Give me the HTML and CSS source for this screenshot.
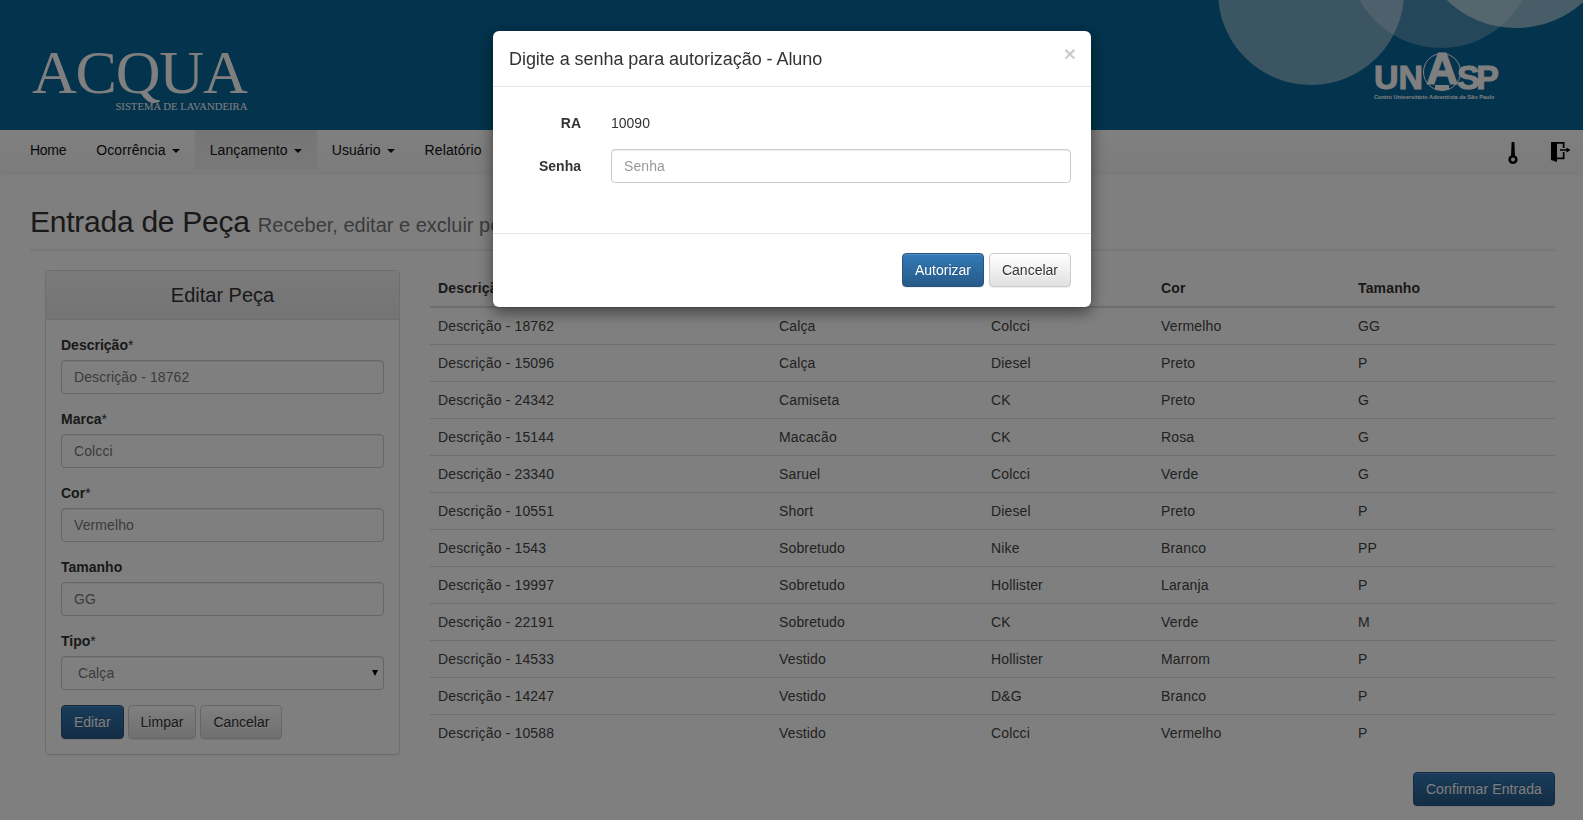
FILE: index.html
```html
<!DOCTYPE html>
<html lang="pt-BR">
<head>
  <meta charset="UTF-8" />
  <title>Entrada de Peça | Acqua</title>
  <link rel="stylesheet" href="styles.css">
</head>
<body>

  <header class="top">
    <span class="circle circle-a"></span>
    <span class="circle circle-b"></span>
    <span class="circle circle-c"></span>

    <div class="brand">
      <div class="brand-name">ACQUA</div>
      <div class="brand-sub">SISTEMA DE LAVANDEIRA</div>
    </div>

    <div class="unasp">
      <div class="unasp-word">
        <span class="unasp-un">UN</span>
        <span class="unasp-ring"><span class="unasp-a">A</span></span>
        <span class="unasp-sp">SP</span>
      </div>
      <div class="unasp-small">Centro Universitário Adventista de São Paulo</div>
    </div>
  </header>

  <nav class="navbar">
    <a href="#">Home</a>
    <a href="#">Ocorrência <span class="caret"></span></a>
    <a href="#" class="active">Lançamento <span class="caret"></span></a>
    <a href="#">Usuário <span class="caret"></span></a>
    <a href="#">Relatório</a>

    <div class="nav-icons">
      <svg width="12" height="24" viewBox="0 0 12 24">
        <path d="M4.600 0h2.800l.6 15H4z"/>
        <circle class="key-ring" cx="6" cy="17.500" r="3.300"/>
      </svg>
      <svg width="20" height="20" viewBox="0 0 20 20">
        <path d="M0 0h13.500v6h-1.700V1.700H6v13.800h5.800V10h1.700v7.200H6V20l-6-2z"/>
        <path d="M9 7.300h6.500V5.500L19.500 8l-4 2.500V8.700H9z"/>
      </svg>
    </div>
  </nav>

  <main class="page">
    <h1 class="page-title">Entrada de Peça <small>Receber, editar e excluir peças</small></h1>

    <div class="columns">
      <section class="panel">
        <h3 class="panel-heading">Editar Peça</h3>
        <form class="panel-body">
          <div class="group">
            <label for="descricao">Descrição<span>*</span></label>
            <input type="text" id="descricao" value="Descrição - 18762">
          </div>
          <div class="group">
            <label for="marca">Marca<span>*</span></label>
            <input type="text" id="marca" value="Colcci">
          </div>
          <div class="group">
            <label for="cor">Cor<span>*</span></label>
            <input type="text" id="cor" value="Vermelho">
          </div>
          <div class="group">
            <label for="tamanho">Tamanho</label>
            <input type="text" id="tamanho" value="GG">
          </div>
          <div class="group">
            <label for="tipo">Tipo<span>*</span></label>
            <div class="select-wrap">
              <select id="tipo">
                <option>Calça</option>
                <option>Camiseta</option>
                <option>Macacão</option>
              </select>
            </div>
          </div>
          <div class="actions">
            <button type="button" class="btn btn-primary">Editar</button>
            <button type="button" class="btn">Limpar</button>
            <button type="button" class="btn">Cancelar</button>
          </div>
        </form>
      </section>

      <section class="list">
        <table>
          <thead>
            <tr>
              <th class="col-desc">Descrição</th>
              <th class="col-tipo">Tipo</th>
              <th class="col-marca">Marca</th>
              <th class="col-cor">Cor</th>
              <th>Tamanho</th>
            </tr>
          </thead>
          <tbody>
            <tr><td>Descrição - 18762</td><td>Calça</td><td>Colcci</td><td>Vermelho</td><td>GG</td></tr>
            <tr><td>Descrição - 15096</td><td>Calça</td><td>Diesel</td><td>Preto</td><td>P</td></tr>
            <tr><td>Descrição - 24342</td><td>Camiseta</td><td>CK</td><td>Preto</td><td>G</td></tr>
            <tr><td>Descrição - 15144</td><td>Macacão</td><td>CK</td><td>Rosa</td><td>G</td></tr>
            <tr><td>Descrição - 23340</td><td>Saruel</td><td>Colcci</td><td>Verde</td><td>G</td></tr>
            <tr><td>Descrição - 10551</td><td>Short</td><td>Diesel</td><td>Preto</td><td>P</td></tr>
            <tr><td>Descrição - 1543</td><td>Sobretudo</td><td>Nike</td><td>Branco</td><td>PP</td></tr>
            <tr><td>Descrição - 19997</td><td>Sobretudo</td><td>Hollister</td><td>Laranja</td><td>P</td></tr>
            <tr><td>Descrição - 22191</td><td>Sobretudo</td><td>CK</td><td>Verde</td><td>M</td></tr>
            <tr><td>Descrição - 14533</td><td>Vestido</td><td>Hollister</td><td>Marrom</td><td>P</td></tr>
            <tr><td>Descrição - 14247</td><td>Vestido</td><td>D&amp;G</td><td>Branco</td><td>P</td></tr>
            <tr><td>Descrição - 10588</td><td>Vestido</td><td>Colcci</td><td>Vermelho</td><td>P</td></tr>
          </tbody>
        </table>
        <div class="list-footer">
          <button type="button" class="btn btn-primary">Confirmar Entrada</button>
        </div>
      </section>
    </div>
  </main>

  <div class="backdrop"></div>

  <div class="modal">
    <div class="modal-header">
      <h4>Digite a senha para autorização - Aluno</h4>
      <button type="button" class="close">&times;</button>
    </div>
    <form class="modal-body">
      <span class="modal-label">RA</span>
      <span class="modal-static">10090</span>
      <label class="modal-label" for="senha">Senha</label>
      <input type="password" id="senha" placeholder="Senha">
    </form>
    <div class="modal-footer">
      <button type="button" class="btn btn-primary">Autorizar</button>
      <button type="button" class="btn">Cancelar</button>
    </div>
  </div>

</body>
</html>
```

FILE: styles.css
```css
* {
  box-sizing: border-box;
}

html, body {
  height: 100%;
}

body {
  margin: 0;
  font-family: "Liberation Sans", Arial, sans-serif;
  font-size: 14px;
  line-height: 20px;
  color: #333;
  background: #fff;
  overflow: hidden;
}

/* top banner */
.top {
  position: relative;
  height: 130px;
  background: #07669a;
  overflow: hidden;
  display: flex;
  align-items: flex-start;
  justify-content: space-between;
  padding: 0 85px 0 32px;
}

.circle {
  position: absolute;
  width: 186px;
  height: 186px;
  border-radius: 50%;
}

.circle-a {
  left: 1218px;
  top: -101px;
  background: rgba(255, 255, 255, 0.45);
}

.circle-b {
  left: 1348px;
  top: -138px;
  background: rgba(255, 255, 255, 0.27);
}

.circle-c {
  left: 1416px;
  top: -172px;
  width: 200px;
  height: 200px;
  background: rgba(255, 255, 255, 0.55);
}

.brand {
  margin-top: 39px;
  color: #fff;
  font-family: "Liberation Serif", "Times New Roman", serif;
  text-align: right;
}

.brand-name {
  font-size: 62px;
  line-height: 66px;
  letter-spacing: -1.200px;
}

.brand-sub {
  font-size: 10.700px;
  line-height: 12px;
  margin-top: -5px;
  margin-right: -1px;
}

.unasp {
  position: relative;
  width: 124px;
  margin-top: 53px;
  color: #fff;
}

.unasp-word {
  display: flex;
  height: 40px;
  font-weight: bold;
  font-size: 34px;
  line-height: 40px;
  -webkit-text-stroke: 1px #fff;
}

.unasp-un {
  flex: 0 0 48px;
  padding-top: 4px;
}

.unasp-ring {
  position: relative;
  flex: 0 0 38px;
  height: 38px;
  border: 1px solid #fff;
  border-radius: 50%;
}

.unasp-a {
  position: absolute;
  left: 0;
  right: 0;
  top: -5px;
  font-size: 44px;
  text-align: center;
  -webkit-text-stroke: 1.200px #fff;
}

.unasp-ring::after {
  content: "";
  position: absolute;
  left: 11px;
  bottom: 0;
  width: 14px;
  height: 5px;
  background: #fff;
}

.unasp-sp {
  flex: 0 0 42px;
  margin-left: -4px;
  padding-top: 4px;
  letter-spacing: -3.500px;
}

.unasp-small {
  margin-top: 1px;
  font-size: 5.600px;
  font-weight: bold;
  line-height: 7px;
  white-space: nowrap;
}

/* nav */
.navbar {
  display: flex;
  height: 42px;
  padding: 0 12px 0 15px;
  background: linear-gradient(to bottom, #fff 0%, #f8f8f8 100%);
  box-shadow: 0 1px 5px rgba(0, 0, 0, 0.08);
}

.navbar a {
  height: 40px;
  padding: 0 15px;
  line-height: 40px;
  letter-spacing: 0.100px;
  color: #111;
  text-decoration: none;
}

.navbar a:first-child {
  letter-spacing: -0.300px;
}

.navbar a.active {
  background: linear-gradient(to bottom, #ebebeb 0%, #f3f3f3 100%);
}

.caret {
  display: inline-block;
  width: 0;
  height: 0;
  margin-left: 2px;
  vertical-align: middle;
  border-top: 4px solid;
  border-right: 4px solid transparent;
  border-left: 4px solid transparent;
}

.nav-icons {
  margin-left: auto;
  display: flex;
  align-items: flex-start;
  gap: 32px;
  padding-top: 12px;
}

.key-ring {
  fill: none;
  stroke: #000;
  stroke-width: 2.600px;
}

/* page */
.page {
  padding: 0 28px 0 30px;
}

.page-title {
  margin: 33px 0 19px;
  padding-bottom: 11px;
  border-bottom: 2px solid #eee;
  font-size: 30px;
  font-weight: normal;
  line-height: 33px;
  letter-spacing: -0.250px;
}

.page-title small {
  font-size: 20px;
  line-height: 1;
  letter-spacing: 0;
  color: #777;
}

.columns {
  display: flex;
  gap: 30px;
  padding-left: 15px;
}

.panel {
  flex: 0 0 355px;
  height: 485px;
  border: 1px solid #ddd;
  border-radius: 4px;
  background: #fff;
  box-shadow: 0 1px 2px rgba(0, 0, 0, 0.05);
}

.panel-heading {
  height: 49px;
  margin: 0;
  border-bottom: 1px solid #ddd;
  border-radius: 3px 3px 0 0;
  background: linear-gradient(to bottom, #f5f5f5 0%, #e8e8e8 100%);
  font-size: 20px;
  font-weight: normal;
  line-height: 48px;
  text-align: center;
}

.panel-body {
  padding: 15px;
}

.group {
  margin-bottom: 15px;
}

.group label {
  display: block;
  margin-bottom: 5px;
  font-weight: bold;
}

.group label span {
  font-weight: normal;
}

input, select {
  display: block;
  width: 100%;
  height: 34px;
  padding: 6px 12px;
  border: 1px solid #ccc;
  border-radius: 4px;
  background: #fff;
  box-shadow: inset 0 1px 1px rgba(0, 0, 0, 0.075);
  font-family: inherit;
  font-size: 14px;
  letter-spacing: 0.100px;
  color: #777;
}

input::placeholder {
  color: #999;
}

select {
  appearance: none;
  padding-left: 16px;
}

.select-wrap {
  position: relative;
}

.select-wrap::after {
  content: "";
  position: absolute;
  right: 6px;
  top: 14px;
  border-top: 6px solid #000;
  border-left: 3.500px solid transparent;
  border-right: 3.500px solid transparent;
}

.actions {
  display: flex;
  gap: 4px;
}

.btn {
  height: 34px;
  padding: 6px 12px;
  border: 1px solid #ccc;
  border-radius: 4px;
  background: linear-gradient(to bottom, #fff 0%, #e0e0e0 100%);
  box-shadow: inset 0 1px 0 rgba(255, 255, 255, 0.15), 0 1px 1px rgba(0, 0, 0, 0.075);
  font-family: inherit;
  font-size: 14px;
  line-height: 20px;
  color: #333;
  text-shadow: 0 1px 0 #fff;
}

.btn-primary {
  border-color: #245580;
  background: linear-gradient(to bottom, #337ab7 0%, #265a88 100%);
  color: #fff;
  text-shadow: 0 -1px 0 rgba(0, 0, 0, 0.2);
}

.list-footer .btn {
  letter-spacing: 0.100px;
}

/* table */
.list {
  flex: 1;
}

table {
  width: 100%;
  border-collapse: collapse;
  table-layout: fixed;
}

th, td {
  padding: 8px;
  text-align: left;
  letter-spacing: 0.150px;
}

th {
  border-bottom: 2px solid #ddd;
}

td {
  border-top: 1px solid #ddd;
  color: #444;
}

tbody tr:first-child td {
  border-top: 0;
}

.col-desc { width: 341px; }
.col-tipo { width: 212px; }
.col-marca { width: 170px; }
.col-cor { width: 197px; }

.list-footer {
  display: flex;
  justify-content: flex-end;
  margin-top: 21px;
}

/* modal */
.backdrop {
  position: fixed;
  inset: 0;
  background: rgba(0, 0, 0, 0.5);
}

.modal {
  position: fixed;
  top: 31px;
  left: 493px;
  width: 598px;
  border-radius: 6px;
  background: #fff;
  box-shadow: 0 5px 15px rgba(0, 0, 0, 0.5);
}

.modal-header {
  display: flex;
  justify-content: space-between;
  padding: 16px 15px 13px 16px;
  border-bottom: 1px solid #e5e5e5;
}

.modal-header h4 {
  margin: 0;
  font-size: 18px;
  font-weight: normal;
  line-height: 25.500px;
  letter-spacing: -0.050px;
}

.close {
  height: 21px;
  padding: 0;
  margin-top: -4px;
  border: 0;
  background: none;
  font-family: inherit;
  font-size: 21px;
  font-weight: bold;
  line-height: 21px;
  color: #000;
  opacity: 0.2;
}

.modal-body {
  display: grid;
  grid-template-columns: 69px 1fr;
  column-gap: 30px;
  row-gap: 15px;
  padding: 20px 20px 50px 19px;
  align-items: center;
}

.modal-label {
  font-weight: bold;
  text-align: right;
}

.modal-static {
  padding: 6px 0 1px;
  color: #333;
}

.modal-body .modal-label:first-child {
  padding: 6px 0 1px;
}

.modal-body input {
  color: #555;
}

.modal-footer {
  display: flex;
  justify-content: flex-end;
  gap: 5px;
  padding: 19px 20px 20px 19px;
  border-top: 1px solid #e5e5e5;
}
```
